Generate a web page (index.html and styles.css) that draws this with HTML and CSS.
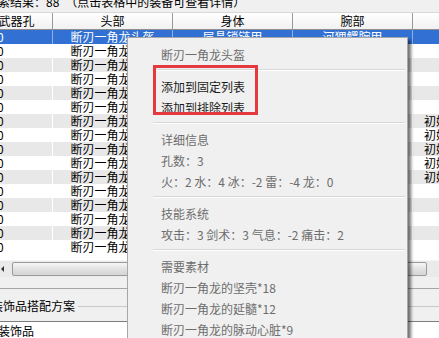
FILE: index.html
```html
<!DOCTYPE html>
<html lang="zh-CN">
<head>
    <meta charset="UTF-8">
    <title>装备搜索结果</title>
    <link rel="stylesheet" href="styles.css">
</head>
<body>
    <div class="window">
        <!-- 顶部提示 -->
        <div class="status"><span>搜索结果：88&ensp;（点击表格中的装备可查看详情）</span></div>

        <!-- 结果表格 -->
        <div class="grid">
            <div class="grid-inner">
                <div class="row head">
                    <div class="cell c0">武器孔</div>
                    <div class="cell c1">头部</div>
                    <div class="cell c2">身体</div>
                    <div class="cell c3">腕部</div>
                    <div class="cell c4">腰部</div>
                </div>
                <div class="row sel">
                    <div class="cell c0">0</div>
                    <div class="cell c1">断刃一角龙头盔</div>
                    <div class="cell c2">层晶锁链甲</div>
                    <div class="cell c3">河狸鳄腕甲</div>
                    <div class="cell c4"></div>
                </div>
                <div class="row"><div class="cell c0">0</div><div class="cell c1">断刃一角龙头盔</div><div class="cell c2"></div><div class="cell c3"></div><div class="cell c4"></div></div>
                <div class="row"><div class="cell c0">0</div><div class="cell c1">断刃一角龙头盔</div><div class="cell c2"></div><div class="cell c3"></div><div class="cell c4"></div></div>
                <div class="row"><div class="cell c0">0</div><div class="cell c1">断刃一角龙头盔</div><div class="cell c2"></div><div class="cell c3"></div><div class="cell c4"></div></div>
                <div class="row"><div class="cell c0">0</div><div class="cell c1">断刃一角龙头盔</div><div class="cell c2"></div><div class="cell c3"></div><div class="cell c4"></div></div>
                <div class="row"><div class="cell c0">0</div><div class="cell c1">断刃一角龙头盔</div><div class="cell c2"></div><div class="cell c3"></div><div class="cell c4"></div></div>
                <div class="row"><div class="cell c0">0</div><div class="cell c1">断刃一角龙头盔</div><div class="cell c2"></div><div class="cell c3"></div><div class="cell c4">初始腰带</div></div>
                <div class="row"><div class="cell c0">0</div><div class="cell c1">断刃一角龙头盔</div><div class="cell c2"></div><div class="cell c3"></div><div class="cell c4">初始腰带</div></div>
                <div class="row"><div class="cell c0">0</div><div class="cell c1">断刃一角龙头盔</div><div class="cell c2"></div><div class="cell c3"></div><div class="cell c4">初始腰带</div></div>
                <div class="row"><div class="cell c0">0</div><div class="cell c1">断刃一角龙头盔</div><div class="cell c2"></div><div class="cell c3"></div><div class="cell c4">初始腰带</div></div>
                <div class="row"><div class="cell c0">0</div><div class="cell c1">断刃一角龙头盔</div><div class="cell c2"></div><div class="cell c3"></div><div class="cell c4">初始腰带</div></div>
                <div class="row"><div class="cell c0">0</div><div class="cell c1">断刃一角龙头盔</div><div class="cell c2"></div><div class="cell c3"></div><div class="cell c4"></div></div>
                <div class="row"><div class="cell c0">0</div><div class="cell c1">断刃一角龙头盔</div><div class="cell c2"></div><div class="cell c3"></div><div class="cell c4"></div></div>
                <div class="row"><div class="cell c0">0</div><div class="cell c1">断刃一角龙头盔</div><div class="cell c2"></div><div class="cell c3"></div><div class="cell c4"></div></div>
                <div class="row"><div class="cell c0">0</div><div class="cell c1">断刃一角龙头盔</div><div class="cell c2"></div><div class="cell c3"></div><div class="cell c4"></div></div>
                <div class="row"><div class="cell c0">0</div><div class="cell c1">断刃一角龙头盔</div><div class="cell c2"></div><div class="cell c3"></div><div class="cell c4"></div></div>
            </div>
        </div>

        <!-- 横向滚动条 -->
        <div class="hscroll">
            <div class="sb-btn"><span class="sb-arrow"></span></div>
            <div class="sb-thumb"></div>
        </div>

        <!-- 下方分组 -->
        <div class="lower">
            <div class="group group-left">
                <div class="legend"><span>装饰品搭配方案</span><i></i></div>
                <div class="list">装饰品</div>
            </div>
            <div class="group group-right">
                <div class="legend"><span>套装信息</span><i></i></div>
                <div class="list">男／女</div>
            </div>
        </div>

        <!-- 右键菜单 -->
        <div class="menu">
            <div class="item off">断刃一角龙头盔</div>
            <div class="sep"></div>
            <div class="item">添加到固定列表</div>
            <div class="item">添加到排除列表</div>
            <div class="sep"></div>
            <div class="item off">详细信息</div>
            <div class="item off">孔数：3</div>
            <div class="item off">火：2 水：4 冰：-2 雷：-4 龙：0</div>
            <div class="sep"></div>
            <div class="item off">技能系统</div>
            <div class="item off">攻击：3 剑术：3 气息：-2 痛击：2</div>
            <div class="sep"></div>
            <div class="item off">需要素材</div>
            <div class="item off">断刃一角龙的坚壳*18</div>
            <div class="item off">断刃一角龙的延髓*12</div>
            <div class="item off">断刃一角龙的脉动心脏*9</div>
            <!-- 标注框 -->
            <div class="mark"></div>
        </div>
    </div>
</body>
</html>
```

FILE: styles.css
```css
/* 基础样式 */
body {
    margin: 0;
    background-color: #f0f0f0;
    font-family: "Noto Sans CJK SC", sans-serif;
    font-size: 12px;
    color: #000;
}

.window {
    position: relative;
    width: 439px;
    height: 338px;
    overflow: hidden;
}

/* 顶部提示 */
.status {
    height: 12px;
    line-height: 14px;
    overflow: hidden;
}

.status span {
    display: block;
    margin: -5px 0 0 -14px;
    white-space: nowrap;
}

/* 表格 */
.grid {
    height: 248px;
    background-color: #fff;
    overflow: hidden;
}

.grid-inner {
    width: 760px;
    margin-left: -19px;
}

.row {
    display: flex;
    height: 14px;
    line-height: 14px;
}

.row:nth-child(even) {
    background-color: #e8e8e8;
}

.cell {
    box-sizing: border-box;
    border-right: 1px solid #fff;
    text-align: center;
    white-space: nowrap;
    overflow: hidden;
}

.c0 { width: 72px; text-align: left; padding-left: 16px; }
.c1, .c2, .c3 { width: 120px; }
.c4 { width: 200px; text-align: left; padding-left: 11px; }

.row.head {
    height: 16px;
    line-height: 16px;
    background: linear-gradient(#fff, #f1f1f1);
    border-top: 1px solid #d8d8d8;
    border-bottom: 1px solid #8f8f8f;
}

.row.head .cell {
    border-right: 1px solid #9a9a9a;
    text-align: center;
    padding-left: 0;
}

.row.sel {
    background-color: #3271d3;
    color: #fff;
}

.row.sel .cell {
    border-right-color: #8fb0e6;
}

/* 滚动条 */
.hscroll {
    display: flex;
    height: 17px;
    box-sizing: border-box;
    padding: 1px 0;
    background-color: #eaeaea;
    border-top: 1px solid #f6f6f6;
}

.sb-btn {
    width: 10px;
}

.sb-arrow {
    display: block;
    width: 0;
    height: 0;
    margin: 4px 0 0 1px;
    border-top: 3px solid transparent;
    border-bottom: 3px solid transparent;
    border-right: 3px solid #333;
}

.sb-thumb {
    width: 415px;
    margin-left: 2px;
    box-sizing: border-box;
    border: 1px solid #9b9b9b;
    border-radius: 2px;
    background: linear-gradient(#f6f6f6, #e2e2e2 50%, #d5d5d5);
}

/* 下方分组 */
.lower {
    display: flex;
    gap: 100px;
    height: 61px;
    box-sizing: border-box;
    margin-top: 11px;
    border-top: 1px solid #a5a5a5;
}

.group {
    width: 300px;
    padding-top: 10px;
}

.group-left {
    margin-left: -9px;
}

.legend {
    display: flex;
    align-items: center;
    height: 14px;
    line-height: 14px;
}

.legend i {
    flex: 1;
    height: 1px;
    margin-left: 3px;
    background-color: #c8c8c8;
}

.list {
    margin-top: 8px;
    height: 30px;
    padding-left: 7px;
    line-height: 18px;
    background-color: #fff;
    border-top: 1px solid #7d7d7d;
}

.group-right .list {
    padding-left: 21px;
}

/* 右键菜单 */
.menu {
    position: absolute;
    left: 127px;
    top: 37px;
    width: 281px;
    height: 320px;
    box-sizing: border-box;
    padding-top: 6px;
    background-color: #f0f0f0;
    border: 1px solid #a8a8a8;
    box-shadow: 3px 3px 3px rgba(0, 0, 0, 0.55);
}

.item {
    height: 21px;
    line-height: 21px;
    padding-left: 33px;
    color: #1b1b1b;
    white-space: nowrap;
}

.item.off {
    color: #6d6d6d;
}

.sep {
    height: 1px;
    margin: 4px 2px 5px 25px;
    background-color: #d7d7d7;
    border-bottom: 1px solid #fff;
}

/* 红色标注框 */
.mark {
    position: absolute;
    left: 25px;
    top: 27px;
    width: 105px;
    height: 50px;
    box-sizing: border-box;
    border: 3px solid #e53940;
}
```
